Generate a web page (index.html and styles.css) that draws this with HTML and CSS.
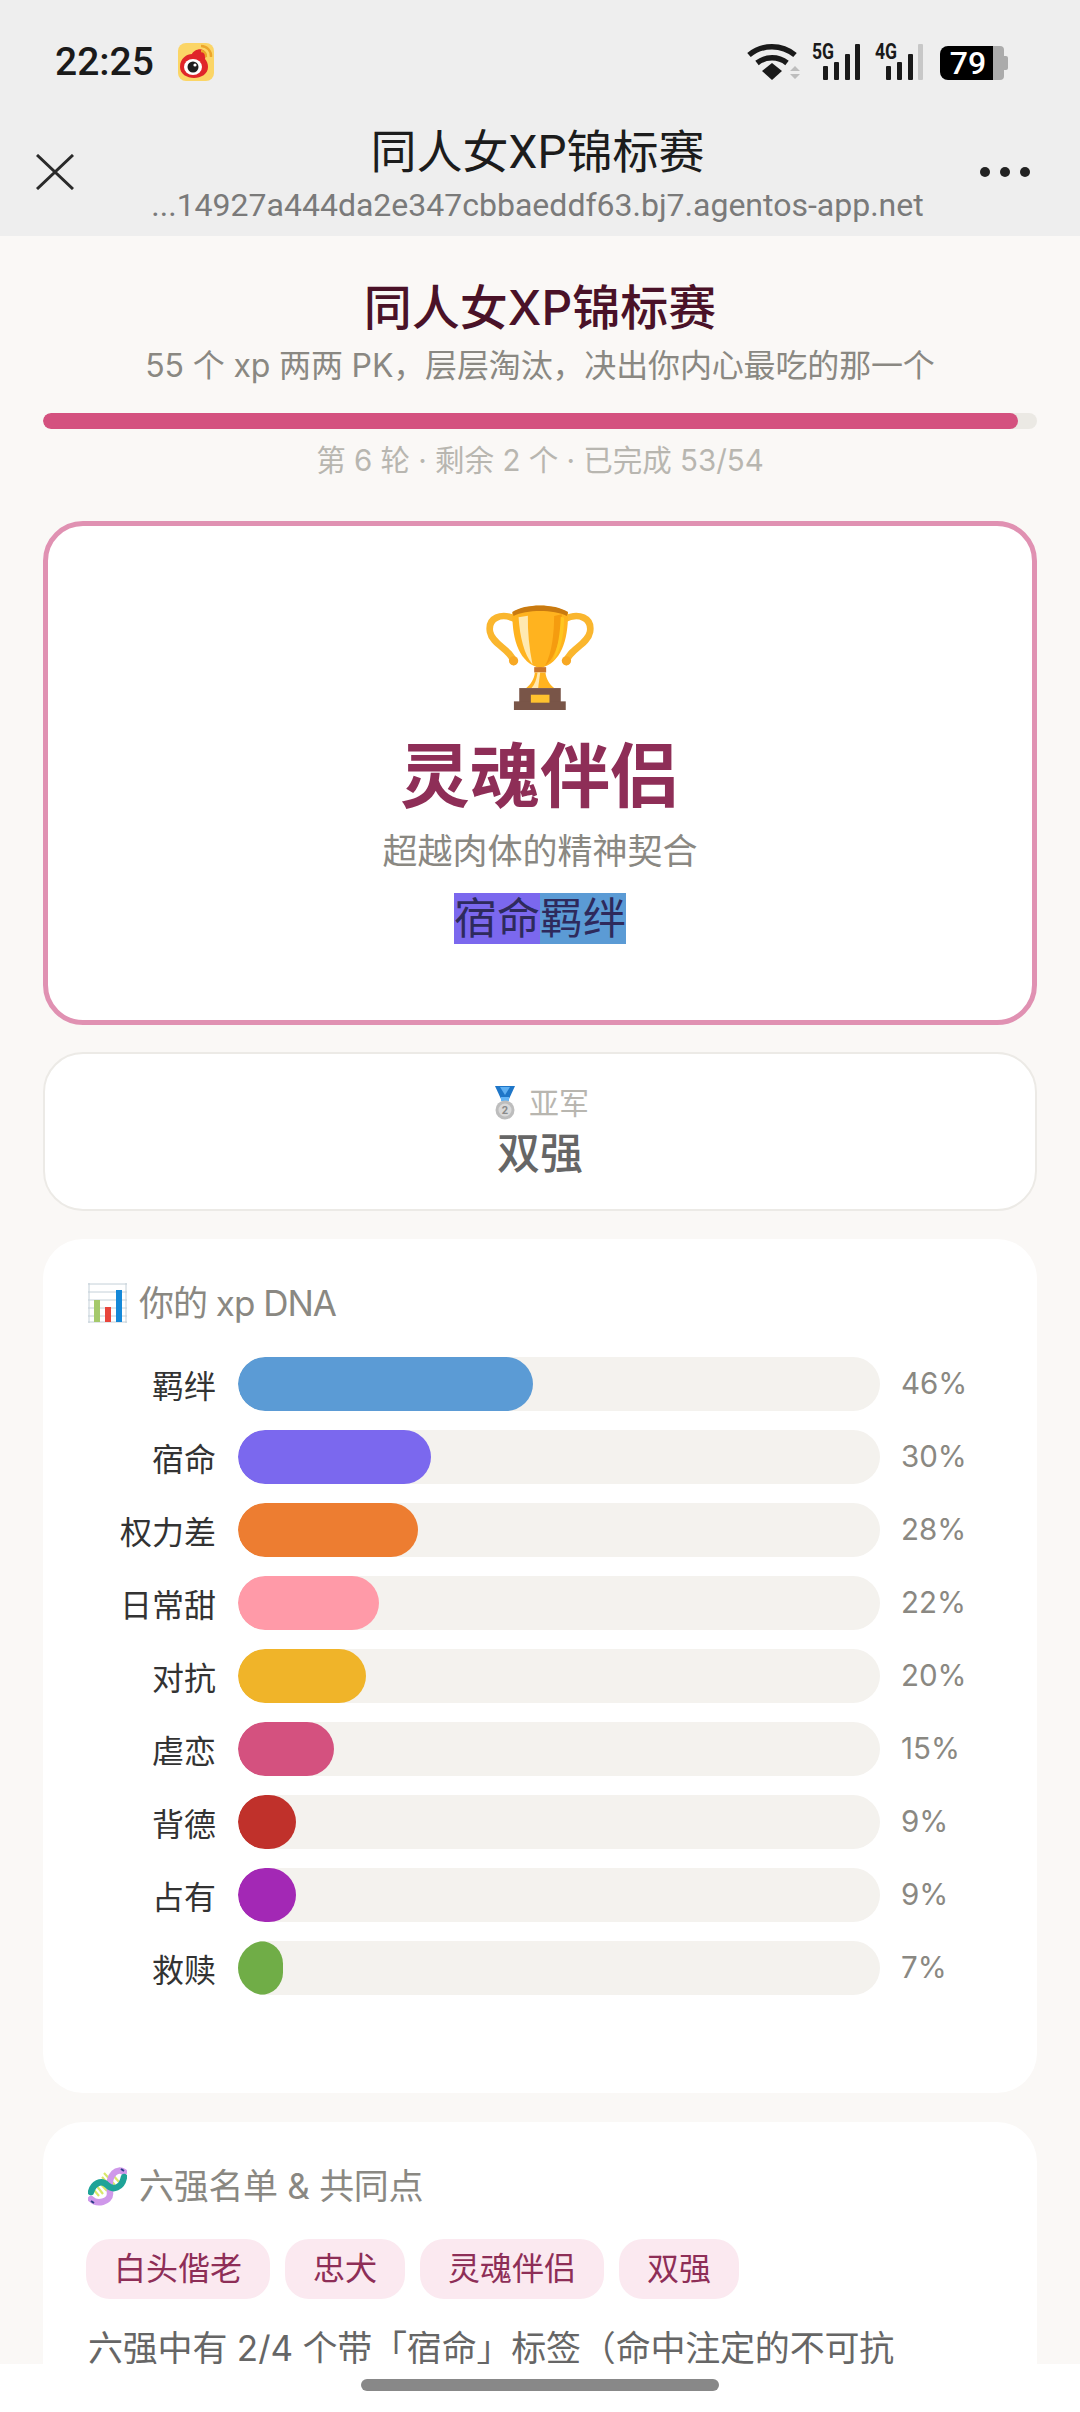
FILE: index.html
```html
<!DOCTYPE html>
<html lang="zh">
<head>
<meta charset="utf-8">
<title>同人女XP锦标赛</title>
<link rel="stylesheet" href="styles.css">
</head>
<body>
<div class="app">
  <header class="chrome">
    <div class="status">
      <div class="status-left">
        <span class="time">22:25</span>
        <svg class="weibo" viewBox="0 0 36 38"><rect x="0" y="0" width="36" height="38" rx="8" fill="#fbd566"/><path d="M2 24C2 15 9 11 14 11c1-3 7-6 11-4 3 2 3 6 2 9 2 2 3 5 3 8 0 7-7 11-14 11S2 31 2 24z" fill="#e0252a"/><ellipse cx="15" cy="24" rx="9" ry="8" fill="#fff"/><circle cx="15" cy="24" r="5.5" fill="#1f1f1f"/><circle cx="17" cy="22" r="1.6" fill="#fff"/><path d="M23 3a10 10 0 0 1 10 11M23 8a5 5 0 0 1 5 6" fill="none" stroke="#eca52a" stroke-width="2.4"/></svg>
      </div>
      <svg class="status-right" viewBox="0 0 262 40">
        <g fill="none" stroke="#1a1a1a" stroke-width="5.5">
          <path d="M2 13a36 36 0 0 1 46 0"/><path d="M10 21a24 24 0 0 1 30 0"/>
        </g>
        <path d="M25 21l10 8-10 9-10-9z" fill="#1a1a1a"/>
        <path d="M43 29l5-5 5 5zM43 32l5 5 5-5z" fill="#bdbdbd"/>
        <text class="net" transform="translate(76 17) scale(.8 1)">5G</text>
        <g fill="#1a1a1a"><rect x="76" y="24" width="5" height="14" rx="1"/><rect x="87" y="20" width="5" height="18" rx="1"/><rect x="98" y="12" width="5" height="26" rx="1"/><rect x="108" y="2" width="5" height="36" rx="1"/></g>
        <text class="net" transform="translate(139 17) scale(.8 1)">4G</text>
        <g fill="#1a1a1a"><rect x="139" y="24" width="5" height="14" rx="1"/><rect x="150" y="20" width="5" height="18" rx="1"/><rect x="161" y="12" width="5" height="26" rx="1"/></g>
        <rect x="171" y="2" width="5" height="36" rx="1" fill="#c8c8c8"/>
        <path d="M201 4h46v34h-46a8 8 0 0 1-8-8v-18a8 8 0 0 1 8-8z" fill="#000"/>
        <path d="M246 4h7a4 4 0 0 1 4 4v26a4 4 0 0 1-4 4h-7z" fill="#ababab"/>
        <path d="M257 14h2a2 2 0 0 1 2 2v10a2 2 0 0 1-2 2h-2z" fill="#ababab"/>
        <text class="batt" x="221" y="32" text-anchor="middle">79</text>
      </svg>
    </div>
    <nav class="nav">
      <svg class="close" viewBox="0 0 38 36"><path d="M1 1l36 34M37 1L1 35" fill="none" stroke="#2a2a2a" stroke-width="3"/></svg>
      <div class="nav-text">
        <div class="nav-title">同人女XP锦标赛</div>
        <div class="nav-url">...14927a444da2e347cbbaeddf63.bj7.agentos-app.net</div>
      </div>
      <div class="dots"><i></i><i></i><i></i></div>
    </nav>
  </header>

  <main class="page">
    <h1 class="title">同人女XP锦标赛</h1>
    <p class="subtitle">55 个 xp 两两 PK，层层淘汰，决出你内心最吃的那一个</p>
    <div class="progress"><div class="progress-fill" style="width:98.1%"></div></div>
    <p class="stats">第 6 轮 · 剩余 2 个 · 已完成 53/54</p>

    <section class="winner">
      <svg class="trophy" viewBox="435 135 325 316">
        <g fill="none" stroke="#fab62e" stroke-width="20" stroke-linecap="round">
          <path d="M525 178c-45-22-85-4-78 38 7 38 62 52 72 90"/>
          <path d="M670 178c45-22 85-4 78 38-7 38-62 52-72 90"/>
        </g>
        <circle cx="518" cy="303" r="14" fill="#f7a823"/><circle cx="677" cy="303" r="14" fill="#f7a823"/>
        <path d="M514 158c40-28 126-28 168 0 0 85-22 152-84 167-62-15-84-82-84-167z" fill="#ffb31f"/>
        <path d="M533 172c4 60 17 112 42 142-10-50-15-100-14-147z" fill="#ffe9b0"/>
        <path d="M640 168c0 50-6 110-27 150 34-25 50-92 50-155z" fill="#f59c0f"/>
        <path d="M660 170c-2 50-8 95-26 135 22-22 36-72 36-132z" fill="#ffc61f"/>
        <path d="M514 156c40-26 126-26 168 0l-4 12c-38-20-122-20-160 0z" fill="#c97a10"/>
        <rect x="580" y="322" width="36" height="16" fill="#c9742a"/>
        <path d="M582 338h32c2 20 12 35 26 47h-84c14-12 24-27 26-47z" fill="#ffb31f"/>
        <path d="M590 338h8l-6 47h-20c10-12 16-28 18-47z" fill="#ffe9b0"/>
        <rect x="535" y="385" width="125" height="42" fill="#795548"/>
        <rect x="519" y="425" width="156" height="26" fill="#795548"/>
        <rect x="570" y="405" width="56" height="24" fill="#ffc22e"/>
      </svg>
      <div class="winner-name">灵魂伴侣</div>
      <div class="winner-desc">超越肉体的精神契合</div>
      <div class="winner-tags"><span class="tag-fate">宿命</span><span class="tag-bond">羁绊</span></div>
    </section>

    <section class="runner">
      <div class="runner-label">
        <svg class="medal" viewBox="0 0 20 34"><path d="M0 0h20l-6 13H6z" fill="#1e76c8"/><path d="M5 1h10l-5 8z" fill="#5fb0f2"/><rect x="6" y="11" width="8" height="4" fill="#64b5f6"/><circle cx="10" cy="24" r="9.5" fill="#bdbdbd"/><circle cx="10" cy="24" r="6.5" fill="#d9d9d9"/><text class="medal-num" x="10" y="28" text-anchor="middle">2</text></svg>
        <span>亚军</span>
      </div>
      <div class="runner-name">双强</div>
    </section>

    <section class="card card-dna">
      <h2 class="card-title">
        <svg class="emoji" viewBox="0 0 39 40"><rect width="39" height="40" fill="#fff"/><path d="M0 1h39M0 9h39M0 17h39M0 25h39M0 33h39M0 39h39M1 0v40M38 0v40" stroke="#c4d0d8" stroke-width="1" fill="none"/><rect x="6" y="17" width="6" height="22" fill="#a5c96b"/><rect x="17" y="24" width="6" height="15" fill="#e8453c"/><rect x="28" y="7" width="6" height="32" fill="#1488d8"/></svg>
        <span>你的 xp DNA</span>
      </h2>
      <div class="bars">
        <div class="row"><span class="row-label">羁绊</span><div class="track"><div class="fill c-bond" style="width:46%"></div></div><span class="pct">46%</span></div>
        <div class="row"><span class="row-label">宿命</span><div class="track"><div class="fill c-fate" style="width:30%"></div></div><span class="pct">30%</span></div>
        <div class="row"><span class="row-label">权力差</span><div class="track"><div class="fill c-power" style="width:28%"></div></div><span class="pct">28%</span></div>
        <div class="row"><span class="row-label">日常甜</span><div class="track"><div class="fill c-sweet" style="width:22%"></div></div><span class="pct">22%</span></div>
        <div class="row"><span class="row-label">对抗</span><div class="track"><div class="fill c-fight" style="width:20%"></div></div><span class="pct">20%</span></div>
        <div class="row"><span class="row-label">虐恋</span><div class="track"><div class="fill c-angst" style="width:15%"></div></div><span class="pct">15%</span></div>
        <div class="row"><span class="row-label">背德</span><div class="track"><div class="fill c-taboo" style="width:9%"></div></div><span class="pct">9%</span></div>
        <div class="row"><span class="row-label">占有</span><div class="track"><div class="fill c-own" style="width:9%"></div></div><span class="pct">9%</span></div>
        <div class="row"><span class="row-label">救赎</span><div class="track"><div class="fill c-save" style="width:7%"></div></div><span class="pct">7%</span></div>
      </div>
    </section>

    <section class="card card-six">
      <h2 class="card-title">
        <svg class="emoji" viewBox="0 0 39 40"><path d="M10 15l9 10M14 11l10 11M16 7l11 12M24 8l7 8M8 19l7 9M6 24l5 6" stroke="#d8e86a" stroke-width="2.2"/><path d="M3 33C9 39 22 36 22 28 22 20 20 13 26 7c3-3 7-3 10-1" fill="none" stroke="#cf98ea" stroke-width="6.5" stroke-linecap="round"/><path d="M3 26C5 18 13 13 19 19c6 6 15 3 17-8" fill="none" stroke="#1fa398" stroke-width="6.5" stroke-linecap="round"/><path d="M3 35l3 2M33 3l3 2" stroke="#2c3e88" stroke-width="2"/></svg>
        <span>六强名单 &amp; 共同点</span>
      </h2>
      <div class="chips">
        <span class="chip">白头偕老</span><span class="chip">忠犬</span><span class="chip">灵魂伴侣</span><span class="chip">双强</span>
      </div>
      <p class="body-text">六强中有 2/4 个带「宿命」标签（命中注定的不可抗</p>
    </section>
  </main>

  <footer class="home"><div class="home-pill"></div></footer>
</div>
</body>
</html>
```
FILE: styles.css
```css
* { box-sizing: border-box; }
html, body { margin: 0; padding: 0; }
body {
  width: 1080px;
  height: 2412px;
  overflow: hidden;
  font-family: Inter, "Noto Sans CJK SC", sans-serif;
  background: #faf8f6;
}
.app { height: 2412px; display: flex; flex-direction: column; }

.chrome { height: 236px; flex: none; background: #eeeeee; padding-top: 40px; font-family: Roboto, "Noto Sans CJK SC", sans-serif; }
.status { height: 44px; display: flex; justify-content: space-between; align-items: center; padding: 0 71px 0 55px; }
.status-left { display: flex; align-items: center; gap: 24px; }
.time { font-size: 39px; font-weight: 500; color: #1a1a1a; line-height: 44px; }
.weibo { width: 36px; height: 38px; display: block; }
.status-right { width: 262px; height: 40px; display: block; overflow: visible; }
.net { font: 700 22px Roboto, sans-serif; fill: #1a1a1a; text-anchor: middle; }
.batt { font: 500 32px Roboto, sans-serif; fill: #fff; }

.nav { height: 128px; margin-top: 24px; display: grid; grid-template-columns: 1fr auto 1fr; align-items: center; padding: 0 50px 0 36px; }
.close { width: 38px; height: 36px; display: block; }
.nav-text { text-align: center; padding: 6px 0 0 9px; }
.nav-title { font-size: 46px; line-height: 60px; color: #1c1c1c; }
.nav-url { font-size: 32px; line-height: 46px; color: #7a7a7a; }
.dots { justify-self: end; display: flex; gap: 10px; }
.dots i { width: 10px; height: 10px; border-radius: 50%; background: #222; }

.page { flex: 1; min-height: 0; overflow: hidden; padding: 42px 43px 0; }
.title { margin: 0; font-size: 48px; line-height: 60px; font-weight: 500; color: #4a1228; text-align: center; }
.subtitle { margin: 6px 0 0; font-size: 32px; line-height: 44px; letter-spacing: -0.15px; color: #8a8882; text-align: center; }
.progress { margin-top: 25px; height: 16px; border-radius: 8px; background: #ebe9e4; overflow: hidden; }
.progress-fill { height: 100%; border-radius: 8px; background: #d4517f; }
.stats { margin: 11px 0 0; font-size: 29.5px; line-height: 40px; color: #b8b6b0; text-align: center; }

.winner { margin-top: 41px; height: 504px; border: 5px solid #e091b2; border-radius: 40px; background: #fff; display: flex; flex-direction: column; align-items: center; padding-top: 79px; }
.trophy { width: 108px; height: 105px; display: block; flex: none; }
.winner-name { margin-top: 22px; font-size: 70px; line-height: 90px; font-weight: 700; color: #8e2e57; }
.winner-desc { margin-top: 4px; font-size: 35px; line-height: 50px; color: #8a8882; }
.winner-tags { margin-top: 17px; display: flex; font-size: 43px; line-height: 51px; color: #2e2a5c; }
.tag-fate { background: #7b68ee; }
.tag-bond { background: #5b9bd5; }

.runner { margin-top: 27px; height: 159px; border: 2px solid #eceae6; border-radius: 40px; background: #fff; padding-top: 31px; text-align: center; }
.runner-label { height: 36px; padding-left: 4px; display: flex; justify-content: center; align-items: center; gap: 14px; font-size: 30px; line-height: 36px; color: #b8b6b0; }
.medal { width: 20px; height: 34px; display: block; }
.medal-num { font: 700 11px Roboto, sans-serif; fill: #8a8a8a; }
.runner-name { margin-top: 2px; font-size: 43px; line-height: 60px; font-weight: 500; color: #666; }

.card { background: #fff; border-radius: 40px; padding: 39px 45px 0; }
.card-dna { margin-top: 28px; height: 854px; }
.card-dna .card-title { letter-spacing: -1px; }
.card-six { margin-top: 29px; height: 600px; }
.card-six .card-title { letter-spacing: -0.3px; }
.card-title { margin: 0; height: 50px; display: flex; align-items: center; gap: 12px; font-size: 35px; line-height: 50px; font-weight: 400; color: #8a8882; }
.emoji { width: 39px; height: 40px; display: block; flex: none; }

.bars { margin-top: 29px; display: flex; flex-direction: column; gap: 19px; }
.row { height: 54px; display: grid; grid-template-columns: 128px 642px auto; column-gap: 22px; align-items: center; }
.row-label { font-size: 32px; text-align: right; color: #333; }
.track { height: 54px; border-radius: 27px; background: #f4f2ee; overflow: hidden; }
.fill { height: 100%; border-radius: 27px; }
.pct { font-size: 29.5px; color: #8a8882; margin: -2px 0 0 -1px; }
.c-bond { background: #5b9bd5; }
.c-fate { background: #7b68ee; }
.c-power { background: #ed7d31; }
.c-sweet { background: #ff9aa8; }
.c-fight { background: #f0b429; }
.c-angst { background: #d4517f; }
.c-taboo { background: #c0312b; }
.c-own { background: #a328b5; }
.c-save { background: #70ad47; }

.chips { margin: 28px 0 0 -2px; display: flex; gap: 15px; }
.chip { height: 60px; padding: 0 28px; border-radius: 24px; background: #fbe9f0; color: #8e2e57; font-size: 32px; line-height: 60px; }
.body-text { margin: 19px 0 0; font-size: 35px; line-height: 60px; letter-spacing: -0.2px; color: #666; }

.home { height: 48px; flex: none; background: #fff; display: flex; justify-content: center; padding-top: 15px; }
.home-pill { width: 358px; height: 12px; border-radius: 6px; background: #888; }
```
